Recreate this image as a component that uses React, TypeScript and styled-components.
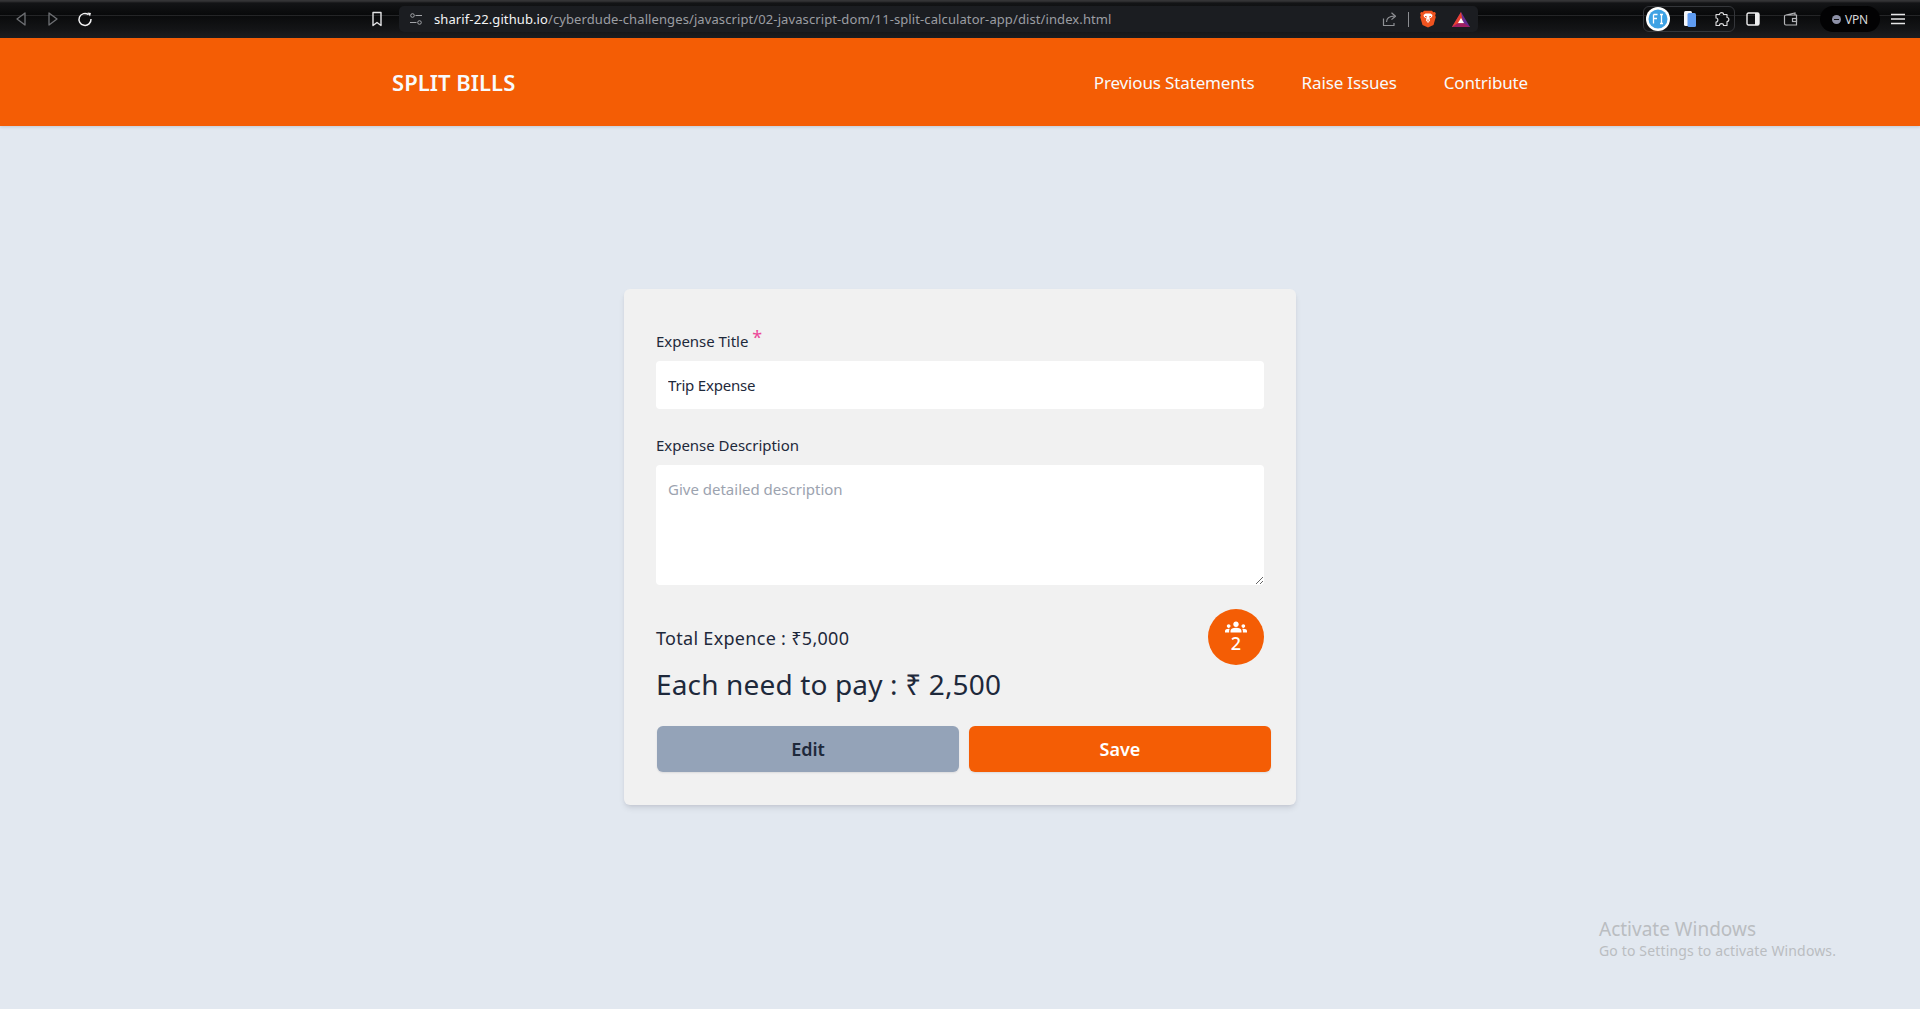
import styled, { createGlobalStyle } from "styled-components"
import { MdGroups } from "react-icons/md"

const GlobalStyle = createGlobalStyle`
  * {
    box-sizing: border-box;
  }
  html, body {
    margin: 0;
    padding: 0;
    height: 100%;
    background: #e2e8f0;
    font-family: "Noto Sans", "Open Sans", sans-serif;
    color: #1e293b;
  }
`

const Page = styled.div`
  position: relative;
  height: 1009px;
  overflow: hidden;
  background: #e2e8f0;
`

const BrowserBar = styled.div`
  display: flex;
  align-items: center;
  height: 38px;
  padding-left: 11px;
  background: linear-gradient(#343436 0, #343436 1px, #131416 3px, #08090a 15px, #242527 15px, #242527 16px, #0a0b0c 16px, #141517 30px, #1d1e20 100%);
`

const NavIcons = styled.div`
  display: flex;
  align-items: center;
  gap: 12px;
`

const ToolIcon = styled.span<{ $size?: number; $left?: number }>`
  display: inline-flex;
  align-items: center;
  justify-content: center;
  flex: none;
  width: ${p => p.$size ?? 20}px;
  height: 20px;
  margin-left: ${p => p.$left ?? 0}px;
`

const AddressBar = styled.div`
  display: flex;
  align-items: center;
  flex: none;
  width: 1079px;
  height: 26px;
  margin-left: 12px;
  padding: 0 7px 0 10px;
  background: #1b1d21;
  border-radius: 5px;
`

const Url = styled.div`
  flex: 1;
  margin-left: 11px;
  font-size: 13px;
  letter-spacing: 0.1px;
  color: #9b9ea3;
  white-space: nowrap;
`

const Host = styled.span`
  color: #f4f4f5;
`

const UrlDivider = styled.span`
  width: 1px;
  height: 15px;
  margin: 0 10px 0 9px;
  background: #8b8d91;
`

const ExtensionBox = styled.div`
  display: flex;
  align-items: center;
  flex: none;
  width: 92px;
  height: 26px;
  margin-left: 165px;
  padding-left: 2px;
  border: 1px solid #34363a;
  border-radius: 6px;
`

const VpnPill = styled.div`
  display: flex;
  align-items: center;
  justify-content: center;
  gap: 4px;
  flex: none;
  width: 60px;
  height: 26px;
  margin-left: 19px;
  border-radius: 13px;
  background: #020203;
  font-size: 12px;
  letter-spacing: -0.2px;
  color: #d6d7d9;
`

const VpnDot = styled.span`
  position: relative;
  width: 9px;
  height: 9px;
  border-radius: 50%;
  background: #8d90a6;

  &::after {
    content: "";
    position: absolute;
    left: 2px;
    right: 2px;
    top: 4px;
    height: 1px;
    background: #111;
  }
`

const Header = styled.header`
  display: flex;
  align-items: center;
  justify-content: space-between;
  height: 88px;
  padding: 0 392px;
  background: #f45d05;
  box-shadow: 0 1px 3px rgba(15, 23, 42, 0.15);
  color: #fff;
`

const Brand = styled.div`
  font-size: 22px;
  font-weight: 600;
  letter-spacing: 0.05px;
  color: #f8fafc;
`

const NavList = styled.nav`
  display: flex;
  gap: 47px;
`

const NavLink = styled.a`
  font-size: 17px;
  letter-spacing: -0.15px;
  color: #f8fafc;
`

const Card = styled.main`
  width: 672px;
  margin: 163px auto 0;
  padding: 40px 32px 33px;
  background: #f1f1f1;
  border-radius: 6px;
  box-shadow: 0 4px 6px -1px rgba(15, 23, 42, 0.1), 0 2px 4px -2px rgba(15, 23, 42, 0.1);
`

const Label = styled.label`
  display: block;
  height: 24px;
  margin-bottom: 8px;
  font-size: 15px;
  line-height: 24px;
  letter-spacing: -0.03px;
  color: #1e293b;
`

const Required = styled.span`
  position: relative;
  top: -3px;
  margin-left: 4px;
  font-size: 18px;
  line-height: 0;
  color: #ec4899;
`

const TextInput = styled.input`
  display: block;
  width: 100%;
  height: 48px;
  margin-bottom: 24px;
  padding: 0 12px;
  border: 0;
  border-radius: 4px;
  background: #fff;
  font: inherit;
  font-size: 15px;
  letter-spacing: -0.2px;
  color: #1e293b;
  outline: none;
`

const TextArea = styled.textarea`
  display: block;
  width: 100%;
  height: 120px;
  margin-bottom: 24px;
  padding: 12px;
  border: 0;
  border-radius: 4px;
  background: #fff;
  font: inherit;
  font-size: 15px;
  line-height: 24px;
  letter-spacing: 0;
  color: #1e293b;
  outline: none;

  &::placeholder {
    color: #9ca3af;
    opacity: 1;
  }
`

const TotalRow = styled.div`
  display: flex;
  align-items: center;
  justify-content: space-between;
  height: 56px;
`

const TotalText = styled.div`
  padding-top: 2px;
  font-size: 18px;
  letter-spacing: 0.3px;
  color: #1e293b;
`

const PeopleBadge = styled.div`
  display: flex;
  flex-direction: column;
  align-items: center;
  justify-content: center;
  width: 56px;
  height: 56px;
  padding-bottom: 8px;
  border-radius: 50%;
  background: #f45d05;
  color: #fff;
  font-size: 18px;
  font-weight: 500;
  line-height: 13px;

  svg {
    margin-bottom: -1px;
  }
`

const EachText = styled.div`
  height: 36px;
  margin: 1px 0 24px;
  font-size: 28px;
  line-height: 36px;
  letter-spacing: 0.15px;
  color: #1e293b;
`

const ButtonRow = styled.div`
  display: flex;
  gap: 10px;
  width: 616px;
`

const Button = styled.button<{ $primary?: boolean }>`
  width: 302px;
  height: 46px;
  margin-left: ${p => (p.$primary ? 0 : 1)}px;
  border: 0;
  border-radius: 6px;
  background: ${p => (p.$primary ? "#f45d05" : "#94a3b8")};
  box-shadow: 0 1px 2px rgba(15, 23, 42, 0.1);
  font: inherit;
  font-size: 18px;
  font-weight: 600;
  letter-spacing: 0;
  color: ${p => (p.$primary ? "#fff" : "#1e293b")};
`

const Watermark = styled.div`
  position: absolute;
  left: 1599px;
  top: 916px;
  color: #babdc1;
`

const WatermarkTitle = styled.div`
  font-size: 19px;
  line-height: 26px;
  letter-spacing: 0;
`

const WatermarkText = styled.div`
  font-size: 14px;
  line-height: 18px;
  letter-spacing: 0.15px;
`

const App = () => {
  return (
    <Page>
      <GlobalStyle />
      <BrowserBar>
        <NavIcons>
          <ToolIcon>
            <svg width="14" height="16" viewBox="0 0 14 16" fill="none" stroke="#6f7175" strokeWidth="1.3" strokeLinejoin="round">
              <path d="M11 2v12L3 8z" />
            </svg>
          </ToolIcon>
          <ToolIcon>
            <svg width="14" height="16" viewBox="0 0 14 16" fill="none" stroke="#6f7175" strokeWidth="1.3" strokeLinejoin="round">
              <path d="M3 2v12l8-6z" />
            </svg>
          </ToolIcon>
          <ToolIcon>
            <svg width="16" height="16" viewBox="0 0 16 16" fill="none" stroke="#f1f1f2" strokeWidth="1.5">
              <path d="M11.6 3.6A6 6 0 1 0 14 8" />
              <path d="M10.5 1.5l3.5 .5-1 3.5z" fill="#f1f1f2" stroke="none" />
            </svg>
          </ToolIcon>
        </NavIcons>
        <ToolIcon $left={272}>
          <svg width="12" height="16" viewBox="0 0 12 16" fill="none" stroke="#e4e4e6" strokeWidth="1.4" strokeLinejoin="round">
            <path d="M2 1.5h8v13l-4-3-4 3z" />
          </svg>
        </ToolIcon>
        <AddressBar>
          <ToolIcon $size={14}>
            <svg width="14" height="14" viewBox="0 0 14 14" fill="none" stroke="#a2a4a8" strokeWidth="1">
              <circle cx="3.5" cy="3.5" r="1.8" />
              <path d="M6.5 3.5H13M1 10.5h6.5" />
              <circle cx="10.5" cy="10.5" r="1.8" />
            </svg>
          </ToolIcon>
          <Url>
            <Host>sharif-22.github.io</Host>/cyberdude-challenges/javascript/02-javascript-dom/11-split-calculator-app/dist/index.html
          </Url>
          <ToolIcon $size={18}>
            <svg width="16" height="16" viewBox="0 0 16 16" fill="none" stroke="#8f9195" strokeWidth="1.2" strokeLinejoin="round">
              <path d="M4.500 11C4.500 7.500 7 5.200 12.500 5.200" />
              <path d="M9.500 1.800l4 3.400-4 3.400" />
              <path d="M1.500 7.500v7h10.500V12" />
            </svg>
          </ToolIcon>
          <UrlDivider />
          <ToolIcon $size={18}>
            <svg width="16" height="18" viewBox="0 0 16 18">
              <path d="M4 .8h8l1.200 1.400 1.600-.2 1 1.200-.6 2.300.6 1.500-2.300 8L8 17.500l-5.500-2.500-2.300-8 .6-1.500-.6-2.300 1-1.200 1.600.2z" fill="#f0531f" />
              <path d="M5.500 3.500h5l2 1.500-.5 2-2.500 1.500.5 2L8 13l-2-2.500.5-2L4 7l-.500-2z" fill="#fff" />
              <path d="M5 6.300l2 .800M11 6.300l-2 .800M8 9.500v2" stroke="#f0531f" strokeWidth="1" />
            </svg>
          </ToolIcon>
          <ToolIcon $size={20} $left={14}>
            <svg width="20" height="17" viewBox="0 0 18 16">
              <path d="M9 1l8.500 14H.5z" fill="#662d91" />
              <path d="M9 1L.5 15h11z" fill="#e8402f" />
              <path d="M9 6.500l3 5H6z" fill="#fff" />
              <path d="M.5 15L6 11.500h6l5.500 3.500z" fill="#9e1f63" />
            </svg>
          </ToolIcon>
        </AddressBar>
        <ExtensionBox>
          <ToolIcon $size={24}>
            <svg width="24" height="24" viewBox="0 0 24 24">
              <circle cx="12" cy="12" r="12" fill="#fff" />
              <circle cx="12" cy="12" r="9.500" fill="#3ea2e4" />
              <path d="M7.500 7.500h4M7.500 7.500v9M7.500 11.500h3.500M14 7.500h3M15.500 7.500v9M14 16.500h3" stroke="#fff" strokeWidth="1.300" fill="none" />
            </svg>
          </ToolIcon>
          <ToolIcon $left={10}>
            <svg width="14" height="18" viewBox="0 0 14 18">
              <rect x="1" y="1" width="8" height="15" rx="1.500" fill="#f4f6fa" />
              <rect x="4.500" y="3" width="8.500" height="14" rx="1.500" fill="#5f9cf2" />
            </svg>
          </ToolIcon>
          <ToolIcon $left={12}>
            <svg width="16" height="16" viewBox="0 0 16 16" fill="none" stroke="#dcdcde" strokeWidth="1.100" strokeLinejoin="round">
              <path d="M5.500 3.500C5.500 1 9.500 1 9.500 3.500h3.500v3c2.500 0 2.500 4 0 4v4H9.500c0-2.500-4-2.500-4 0H2v-3.500c2.500 0 2.500-4 0-4V3.500z" />
            </svg>
          </ToolIcon>
        </ExtensionBox>
        <ToolIcon $left={8}>
          <svg width="14" height="14" viewBox="0 0 14 14">
            <rect x="1" y="1" width="12" height="12" rx="1.500" fill="none" stroke="#eeeeef" strokeWidth="1.400" />
            <rect x="9" y="1" width="4" height="12" fill="#eeeeef" />
          </svg>
        </ToolIcon>
        <ToolIcon $left={18}>
          <svg width="16" height="14" viewBox="0 0 16 14" fill="none" stroke="#b4b5b8" strokeWidth="1.200">
            <path d="M3 3l9-2v2M1.500 4.500A1.500 1.500 0 0 1 3 3h10.500v10H3a1.500 1.500 0 0 1-1.500-1.500z" />
            <rect x="9.500" y="6.500" width="4" height="3" />
          </svg>
        </ToolIcon>
        <VpnPill>
          <VpnDot />
          VPN
        </VpnPill>
        <ToolIcon $size={14} $left={11}>
          <svg width="14" height="12" viewBox="0 0 14 12" stroke="#e6e6e7" strokeWidth="1.400">
            <path d="M0 1.500h14M0 6h14M0 10.500h14" />
          </svg>
        </ToolIcon>
      </BrowserBar>

      <Header>
        <Brand>SPLIT BILLS</Brand>
        <NavList>
          <NavLink>Previous Statements</NavLink>
          <NavLink>Raise Issues</NavLink>
          <NavLink>Contribute</NavLink>
        </NavList>
      </Header>

      <Card>
        <Label>
          Expense Title<Required>*</Required>
        </Label>
        <TextInput defaultValue="Trip Expense" />
        <Label>Expense Description</Label>
        <TextArea placeholder="Give detailed description" />
        <TotalRow>
          <TotalText>Total Expence : ₹5,000</TotalText>
          <PeopleBadge>
            <MdGroups size={22} />
            2
          </PeopleBadge>
        </TotalRow>
        <EachText>Each need to pay : ₹ 2,500</EachText>
        <ButtonRow>
          <Button>Edit</Button>
          <Button $primary>Save</Button>
        </ButtonRow>
      </Card>

      <Watermark>
        <WatermarkTitle>Activate Windows</WatermarkTitle>
        <WatermarkText>Go to Settings to activate Windows.</WatermarkText>
      </Watermark>
    </Page>
  )
}

export default App
